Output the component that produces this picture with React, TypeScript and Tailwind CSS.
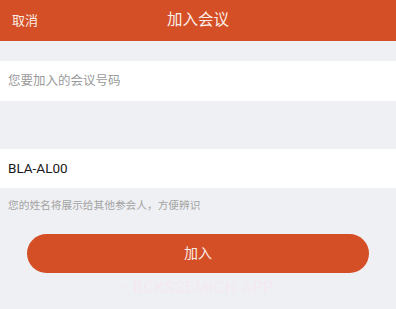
import React from "react";

export default function App() {
  return (
    <div
      className="w-[396px] h-[309px] bg-[#eff0f4] flex flex-col overflow-hidden"
      style={{ fontFamily: 'Roboto, "Noto Sans CJK SC", "Noto Sans", sans-serif' }}
    >
      <div className="h-[41px] bg-[#d44f26] relative flex items-center px-[12px] shrink-0">
        <span className="text-[13px] text-[#fbeee6]">取消</span>
        <span className="absolute left-0 right-0 text-center text-[15.5px] text-[#fbeee6] pointer-events-none">
          加入会议
        </span>
      </div>
      <div className="h-[20px] shrink-0" />
      <div className="h-[40px] bg-white flex items-center px-[8px] shrink-0">
        <span className="text-[12.5px] text-[#9a9a9a]">您要加入的会议号码</span>
      </div>
      <div className="h-[48px] shrink-0" />
      <div className="h-[39px] bg-white flex items-center px-[8px] shrink-0">
        <span className="text-[13.5px] text-[#1a1a1a]">BLA-AL00</span>
      </div>
      <div className="h-[36px] flex items-center px-[8px] shrink-0">
        <span className="text-[10.7px] text-[#a3a3a3]">您的姓名将展示给其他参会人，方便辨识</span>
      </div>
      <div className="h-[10px] shrink-0" />
      <div className="px-[27px] shrink-0">
        <div className="h-[39px] rounded-full bg-[#d44f26] flex items-center justify-center">
          <span className="text-[14px] text-[#fbeee6]">加入</span>
        </div>
      </div>
      <div className="flex justify-center mt-[3px]">
        <span className="text-[16px] text-[#f4e9f3] tracking-[0.5px]">• BCKSSEMICH.APP</span>
      </div>
    </div>
  );
}
